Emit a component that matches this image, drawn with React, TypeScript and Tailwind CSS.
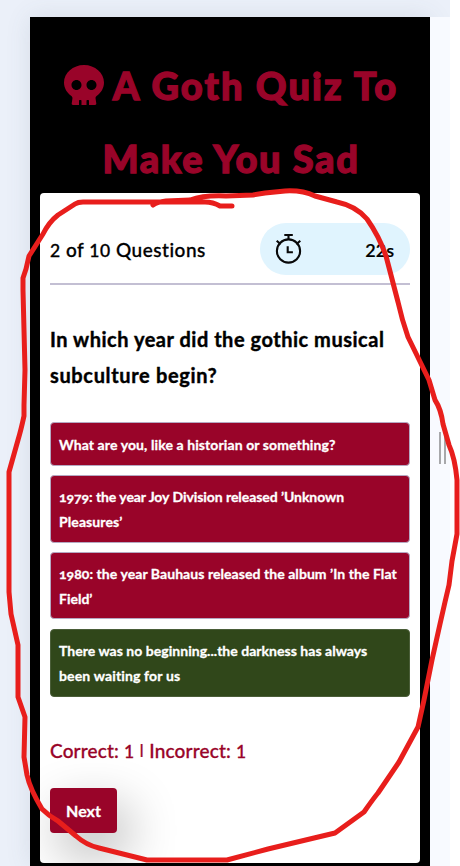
import { FaSkull } from "react-icons/fa";

type Line = { text: string; style: string };

const options: { box: string; lines: Line[] }[] = [
  {
    box: "h-[43.5px] mb-[9px] pt-px bg-[#990429] border-[#b5a9c2]",
    lines: [{ text: "What are you, like a historian or something?", style: "tracking-[0.1px]" }],
  },
  {
    box: "h-[68px] mb-[9.5px] bg-[#990429] border-[#b5a9c2]",
    lines: [
      { text: "1979: the year Joy Division released ’Unknown", style: "tracking-[-0.06px]" },
      { text: "Pleasures’", style: "tracking-[0.1px]" },
    ],
  },
  {
    box: "h-[67px] mb-[9.5px] bg-[#990429] border-[#b5a9c2]",
    lines: [
      { text: "1980: the year Bauhaus released the album ’In the Flat", style: "tracking-[0.06px]" },
      { text: "Field’", style: "" },
    ],
  },
  {
    box: "h-[68px] bg-[#30471a] border-[#4a5d38]",
    lines: [
      { text: "There was no beginning...the darkness has always", style: "tracking-[0.03px]" },
      { text: "been waiting for us", style: "tracking-[0.15px]" },
    ],
  },
];

function Stopwatch() {
  return (
    <svg width="30" height="34" viewBox="0 0 30 34" fill="none" stroke="#090909" strokeWidth="2.1">
      <circle cx="14.5" cy="19" r="11.6" />
      <path d="M10.3 3h8.5M14.5 3v5M2.7 8.7l4 3.6M26.3 8.7l-4 3.6M13.7 14.2v6h5.2" />
    </svg>
  );
}

export default function App() {
  return (
    <div className="relative flex h-[866px] w-[460px] overflow-hidden bg-white font-['Lato','Noto_Sans',sans-serif] [font-feature-settings:'onum','liga'_0]">
      <div className="flex w-[450px] overflow-hidden bg-[#ebf0f9] pl-[30px] pt-[17px]">
        <main className="h-[849px] w-[400px] shrink-0 bg-black px-[10px] pt-[32px] shadow-[0_0_24px_rgba(70,90,110,0.12)]">
          <h1 className="h-[144px] pl-[2px] text-center text-[38px] font-black leading-[73px] text-[#990429] [-webkit-text-stroke:1.3px_#990429]">
            <span className="flex items-center justify-center whitespace-nowrap">
              <FaSkull className="mb-px mr-[9px] size-[40px] shrink-0 [stroke-width:0]" />
              <span className="tracking-[2.1px]">A Goth Quiz To</span>
            </span>
            <span className="block whitespace-nowrap tracking-[1.6px]">Make You Sad</span>
          </h1>
          <section className="h-[670px] overflow-hidden rounded-[4px] bg-white px-[10px] pt-[30px]">
            <header className="flex h-[62px] items-start justify-between border-b-2 border-[#c3bfd3]">
              <p className="whitespace-nowrap text-[19px] font-medium leading-[54px] tracking-[0.52px] text-black [-webkit-text-stroke:0.3px_black]">
                <span className="text-[17.5px] [font-feature-settings:'lnum']">2</span> of{" "}
                <span className="text-[17.5px] [font-feature-settings:'lnum']">10</span> Questions
              </p>
              <div className="flex h-[52px] w-[150px] items-center justify-between rounded-[26px] bg-[#e0f4fe] pl-[14px] pr-[16px]">
                <Stopwatch />
                <span className="pt-[3px] text-[18px] font-semibold text-black [-webkit-text-stroke:0.2px_black] [font-feature-settings:'lnum']">
                  22s
                </span>
              </div>
            </header>
            <h2 className="mt-[36px] text-[20px] font-bold leading-[36px] text-black [-webkit-text-stroke:0.4px_black]">
              <span className="block whitespace-nowrap tracking-[0.52px]">In which year did the gothic musical</span>
              <span className="block whitespace-nowrap tracking-[0.65px]">subculture begin?</span>
            </h2>
            <ul className="mt-[29px]">
              {options.map((option) => (
                <li
                  key={option.lines[0].text}
                  className={`flex flex-col justify-center rounded-[4px] border pl-[8px] text-[14px] font-bold leading-[25px] text-white [-webkit-text-stroke:0.3px_white] ${option.box}`}
                >
                  {option.lines.map((line) => (
                    <span key={line.text} className={`block whitespace-nowrap ${line.style}`}>
                      {line.text}
                    </span>
                  ))}
                </li>
              ))}
            </ul>
            <p className="mt-[36px] h-[36px] whitespace-nowrap text-[19px] font-medium leading-[36px] tracking-[0.17px] text-[#990429] [-webkit-text-stroke:0.3px_#990429]">
              Correct: <span className="text-[17.5px] [font-feature-settings:'lnum']">1</span>{" "}
              <span className="relative bottom-px inline-block scale-y-75">|</span> Incorrect:{" "}
              <span className="text-[17.5px] [font-feature-settings:'lnum']">1</span>
            </p>
            <button className="mt-[19px] h-[45px] w-[67px] rounded-[4px] bg-[#990429] pt-px text-[16px] font-bold text-white shadow-[10px_20px_50px_rgba(0,0,0,0.3)] [-webkit-text-stroke:0.3px_white]">
              Next
            </button>
          </section>
        </main>
        <aside className="flex h-[849px] w-[20px] shrink-0 items-start gap-[3px] bg-[#f8faff] pl-[9px] pt-[415px]">
          <i className="h-[32px] w-[2px] bg-[#a7a8ab]" />
          <i className="h-[32px] w-[2px] bg-[#a7a8ab]" />
        </aside>
      </div>
      <svg
        className="pointer-events-none absolute inset-0"
        width="460"
        height="866"
        viewBox="0 0 460 866"
        fill="none"
        stroke="#e81e1c"
        strokeWidth="5"
        strokeLinecap="round"
        strokeLinejoin="round"
      >
        <path d="M232 206H220Q213 202 205 202H83Q78 202 75 204L58 215Q49 222 43 234L29 256L26 269L23 278V290L25 370L24 405V416Q21 430 18 440L9 472V592L11 614L18 645V697L25 717L24 757L27 775Q30 789 42 809Q49 816 58 821L76 836Q86 845 99 848L147 860H227L268 849L335 833L364 812Q373 799 378 793L399 762L418 727L424 700L432 660L440 624L445 602L449 585L452 561L457 534V480Q455 458 449 445L443 424Q441 409 435 400L429 380L408 337Q402 320 398 302L386 256Q379 236 367 219Q356 206 337 202L315 196Q302 190 285 191L265 193L253 195L226 196Q204 195 190 200L166 201Q157 202 153 205" />
      </svg>
    </div>
  );
}
